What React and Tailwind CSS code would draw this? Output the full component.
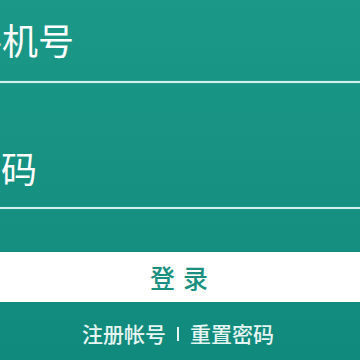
export default function App() {
  return (
    <div className="w-[360px] h-[360px] overflow-hidden bg-gradient-to-b from-[#1b9888] to-[#108a7c] font-['Noto_Sans_CJK_SC','Noto_Sans',sans-serif]">
      <div className="h-[81px] pt-[21px]">
        <div className="ml-[-34px] text-[36px] leading-[36px] text-white">手机号</div>
      </div>
      <div className="h-[2px] bg-[#d2f0eb] shadow-[0_0_1px_#9fdcd2]" />
      <div className="h-[124px] pt-[66px]">
        <div className="ml-[-35px] text-[36px] leading-[36px] text-white">密码</div>
      </div>
      <div className="h-[2px] bg-[#d2f0eb] shadow-[0_0_1px_#9fdcd2]" />
      <div className="mt-[43px] h-[50px] bg-white flex items-center justify-center">
        <span className="text-[25px] leading-none font-medium text-[#1a8f80] tracking-[8px] pl-[6px]">登录</span>
      </div>
      <div className="h-[58px] pt-[5px] flex items-center justify-center pr-[4px] text-[21px] font-medium text-[#e6f5f2]">
        <span>注册帐号</span>
        <span className="mx-[11px] inline-block w-[2px] h-[14px] bg-[#e6f5f2]" />
        <span>重置密码</span>
      </div>
    </div>
  );
}
